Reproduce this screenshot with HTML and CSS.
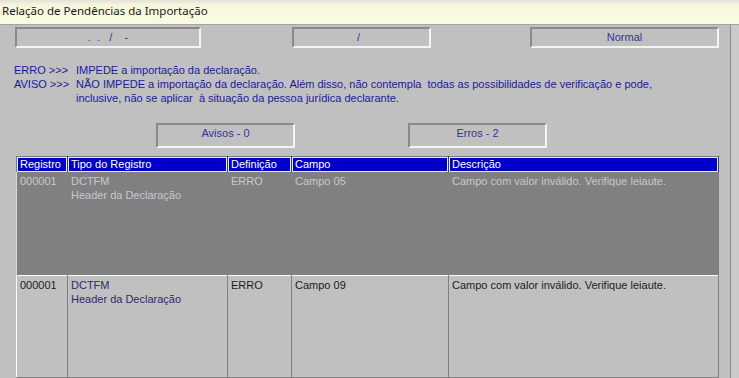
FILE: index.html
```html
<!DOCTYPE html>
<html lang="pt-BR">
<head>
    <meta charset="UTF-8">
    <title>Relação de Pendências da Importação</title>
    <link rel="stylesheet" href="styles.css">
</head>
<body>
    <div class="window">
        <div class="titlebar">Relação de Pendências da Importação</div>
        <div class="client">
            <div class="panel">
                <div class="status-row">
                    <div class="field field-cnpj">.  .   /    -</div>
                    <div class="field field-period">/  </div>
                    <div class="field field-type">Normal</div>
                </div>

                <div class="legend">
                    <span class="legend-key">ERRO &gt;&gt;&gt;</span>
                    <span>IMPEDE a importação da declaração.</span>
                    <span class="legend-key">AVISO &gt;&gt;&gt;</span>
                    <span>NÃO IMPEDE a importação da declaração. Além disso, não contempla  todas as possibilidades de verificação e pode,<br>inclusive, não se aplicar  à situação da pessoa jurídica declarante.</span>
                </div>

                <div class="counts">
                    <div class="field count">Avisos - 0</div>
                    <div class="field count count-errors">Erros - 2</div>
                </div>

                <table class="grid">
                    <colgroup>
                        <col class="col-reg">
                        <col class="col-tipo">
                        <col class="col-def">
                        <col class="col-campo">
                        <col class="col-desc">
                    </colgroup>
                    <thead>
                        <tr>
                            <th>Registro</th>
                            <th>Tipo do Registro</th>
                            <th>Definição</th>
                            <th>Campo</th>
                            <th>Descrição</th>
                        </tr>
                    </thead>
                    <tbody>
                        <tr class="row-selected">
                            <td>000001</td>
                            <td class="tipo">DCTFM<br>Header da Declaração</td>
                            <td>ERRO</td>
                            <td>Campo 05</td>
                            <td>Campo com valor inválido. Verifique leiaute.</td>
                        </tr>
                        <tr class="row-normal">
                            <td>000001</td>
                            <td class="tipo">DCTFM<br>Header da Declaração</td>
                            <td>ERRO</td>
                            <td>Campo 09</td>
                            <td>Campo com valor inválido. Verifique leiaute.</td>
                        </tr>
                    </tbody>
                </table>
            </div>
            <div class="edge"></div>
        </div>
    </div>
</body>
</html>
```

FILE: styles.css
```css
body {
    margin: 0;
    background-color: #c0c0c0;
    font-family: "Liberation Sans", Arial, sans-serif;
    font-size: 11px;
    overflow: hidden;
}

.window {
    width: 739px;
    height: 378px;
    display: flex;
    flex-direction: column;
}

.titlebar {
    height: 24px;
    border-bottom: 1px solid #a4a49c;
    background: linear-gradient(#e2e2da, #f6f6dc 5px, #fbfbe2);
    font-family: "Noto Sans", sans-serif;
    font-size: 11.5px;
    color: #1a1a1a;
    line-height: 22px;
    padding-left: 2px;
}

.client {
    flex: 1;
    display: flex;
}

.panel {
    width: 730px;
    border-right: 1px solid #8c8c8c;
}

.edge {
    flex: 1;
    background-color: #cacaca;
}

/* sunken boxes */
.field {
    box-sizing: border-box;
    border: 2px solid;
    border-color: #8a8a8a #f4f4f4 #f4f4f4 #8a8a8a;
    text-align: center;
    color: #333399;
    white-space: pre;
}

.status-row {
    display: flex;
    margin-top: 2px;
    padding-left: 15px;
}

.status-row .field {
    height: 21px;
    line-height: 17px;
}

.field-cnpj {
    width: 186px;
}

.field-period {
    width: 139px;
    margin-left: 91px;
}

.field-type {
    width: 189px;
    margin-left: 99px;
}

.legend {
    display: grid;
    grid-template-columns: 62px 1fr;
    margin-top: 15px;
    padding-left: 14px;
    color: #1a1a9a;
    line-height: 14px;
    white-space: pre;
}

.counts {
    display: flex;
    margin-top: 18px;
    padding-left: 156px;
}

.count {
    width: 139px;
    height: 25px;
    padding-top: 1px;
    line-height: 14px;
}

.count-errors {
    margin-left: 113px;
}

/* grid */
.grid {
    margin-top: 8px;
    margin-left: 16px;
    border-collapse: collapse;
    table-layout: fixed;
    width: 703px;
    border-top: 1px solid #7a7a7a;
    border-left: 1px solid #7a7a7a;
}

.col-reg { width: 51px; }
.col-tipo { width: 160px; }
.col-def { width: 64px; }
.col-campo { width: 157px; }
.col-desc { width: 270px; }

.grid th {
    height: 15px;
    padding: 0 0 0 3px;
    background-color: #0000c8;
    color: #ffffff;
    font-weight: normal;
    text-align: left;
    line-height: 13px;
    box-shadow: inset 0 0 0 1px #e8e8f8;
    border-right: 1px solid #404040;
}

.grid td {
    vertical-align: top;
    padding: 2px 0 0 3px;
    line-height: 14px;
    border-left: 1px solid #ffffff;
    border-right: 1px solid #808080;
    white-space: nowrap;
}

.row-selected td {
    height: 101px;
    background-color: #808080;
    color: #c8c8c8;
    border-left-color: #d8d8d8;
}

.row-selected .tipo {
    color: #c4c8d4;
}

.row-normal td {
    height: 99px;
    background-color: #c0c0c0;
    color: #1c1c1c;
    border-top: 1px solid #ffffff;
    border-bottom: 1px solid #808080;
}

.row-normal .tipo {
    color: #2a2a70;
}
```
